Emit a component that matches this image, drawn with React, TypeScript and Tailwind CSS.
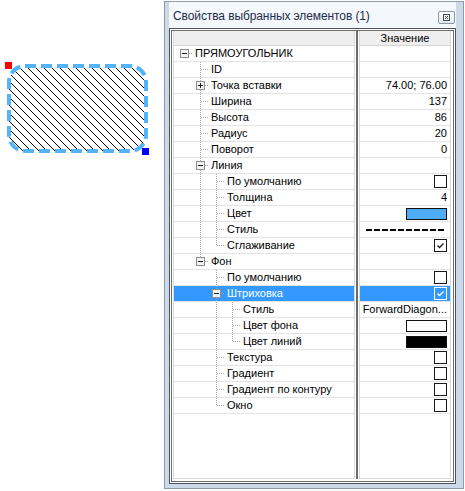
import React from 'react';

type Cell = 'none' | 'pass' | 'tee' | 'elbow' | 'root';

interface Row {
  label: string;
  cells: Cell[];
  expander?: '-' | '+';
  value?: (selected: boolean) => React.ReactNode;
  selected?: boolean;
}

const font = { fontFamily: '"Liberation Sans", Arial, sans-serif' };

const CheckBox = ({ checked, selected }: { checked?: boolean; selected?: boolean }) => (
  <span
    className={`flex w-[13px] h-[13px] items-center justify-center border ${
      selected ? 'border-white' : 'border-[#1a1a1a] bg-white'
    }`}
  >
    {checked && (
      <svg width="11" height="11" viewBox="0 0 11 11">
        <path d="M2.5 5.5 L4.5 7.5 L8.5 3.5" fill="none" stroke={selected ? '#fff' : '#1a1a1a'} strokeWidth="1.3" />
      </svg>
    )}
  </span>
);

const Swatch = ({ color }: { color: string }) => (
  <span className="block w-[41px] h-[12px] border border-[#111]" style={{ background: color }} />
);

const text = (t: string) => () => <span>{t}</span>;
const box = (checked?: boolean) => (selected: boolean) => <CheckBox checked={checked} selected={selected} />;

const rows: Row[] = [
  { label: 'ПРЯМОУГОЛЬНИК', cells: ['root'], expander: '-' },
  { label: 'ID', cells: ['none', 'tee'] },
  { label: 'Точка вставки', cells: ['none', 'tee'], expander: '+', value: text('74.00; 76.00') },
  { label: 'Ширина', cells: ['none', 'tee'], value: text('137') },
  { label: 'Высота', cells: ['none', 'tee'], value: text('86') },
  { label: 'Радиус', cells: ['none', 'tee'], value: text('20') },
  { label: 'Поворот', cells: ['none', 'tee'], value: text('0') },
  { label: 'Линия', cells: ['none', 'tee'], expander: '-' },
  { label: 'По умолчанию', cells: ['none', 'pass', 'tee'], value: box(false) },
  { label: 'Толщина', cells: ['none', 'pass', 'tee'], value: text('4') },
  { label: 'Цвет', cells: ['none', 'pass', 'tee'], value: () => <Swatch color="#4fadf6" /> },
  {
    label: 'Стиль',
    cells: ['none', 'pass', 'tee'],
    value: () => (
      <svg width="78" height="2" className="mr-[3px]">
        <line x1="0" y1="1" x2="78" y2="1" stroke="#000" strokeWidth="2" strokeDasharray="6 2" />
      </svg>
    ),
  },
  { label: 'Сглаживание', cells: ['none', 'pass', 'elbow'], value: box(true) },
  { label: 'Фон', cells: ['none', 'elbow'], expander: '-' },
  { label: 'По умолчанию', cells: ['none', 'none', 'tee'], value: box(false) },
  { label: 'Штриховка', cells: ['none', 'none', 'tee'], expander: '-', selected: true, value: box(true) },
  { label: 'Стиль', cells: ['none', 'none', 'pass', 'tee'], value: text('ForwardDiagon...') },
  { label: 'Цвет фона', cells: ['none', 'none', 'pass', 'tee'], value: () => <Swatch color="#ffffff" /> },
  { label: 'Цвет линий', cells: ['none', 'none', 'pass', 'elbow'], value: () => <Swatch color="#000000" /> },
  { label: 'Текстура', cells: ['none', 'none', 'tee'], value: box(false) },
  { label: 'Градиент', cells: ['none', 'none', 'tee'], value: box(false) },
  { label: 'Градиент по контуру', cells: ['none', 'none', 'tee'], value: box(false) },
  { label: 'Окно', cells: ['none', 'none', 'elbow'], value: box(false) },
];

const dot = { stroke: '#a8a8a8', strokeWidth: 1, strokeDasharray: '1 1', shapeRendering: 'crispEdges' as const };

const TreeCell = ({ kind, expander }: { kind: Cell; expander?: '-' | '+' }) => (
  <svg width="16" height="16" className="shrink-0 overflow-visible self-start">
    {(kind === 'pass' || kind === 'tee') && <line x1="8.5" y1="0" x2="8.5" y2="16" {...dot} />}
    {kind === 'elbow' && <line x1="8.5" y1="0" x2="8.5" y2="8" {...dot} />}
    {(kind === 'tee' || kind === 'elbow' || kind === 'root') && <line x1="9" y1="7.5" x2="16" y2="7.5" {...dot} />}
    {expander && (
      <g shapeRendering="crispEdges">
        <rect x="4.5" y="3.5" width="8" height="8" fill="#f1f1f1" stroke="#8e8f8f" />
        <line x1="6" y1="7.5" x2="11" y2="7.5" stroke="#222" />
        {expander === '+' && <line x1="8.5" y1="5" x2="8.5" y2="10" stroke="#222" />}
      </g>
    )}
  </svg>
);

const Canvas = () => (
  <svg width="164" height="491" className="shrink-0">
    <defs>
      <pattern id="hatch" width="8" height="8" patternUnits="userSpaceOnUse">
        <path d="M0 0 L8 8 M-1 7 L1 9 M7 -1 L9 1" stroke="#000" strokeWidth="1" shapeRendering="crispEdges" />
      </pattern>
    </defs>
    <rect x="9" y="66" width="137" height="85" rx="16" fill="#fff" />
    <rect x="9" y="66" width="137" height="85" rx="16" fill="url(#hatch)" />
    <rect x="9" y="66" width="137" height="85" rx="16" fill="none" stroke="#52b4fa" strokeWidth="4" strokeDasharray="11 5" />
    <rect x="5" y="62" width="7" height="7" fill="#ff0000" />
    <rect x="142" y="148" width="7" height="7" fill="#0000ff" />
  </svg>
);

export default function App() {
  return (
    <div className="flex w-[465px] h-[491px] bg-white text-[11px] text-black" style={font}>
      <Canvas />
      <div className="mt-px flex h-[488px] w-[300px] shrink-0 flex-col border border-[#8d9bad] bg-[#cbd9e8] pl-[4px] pr-[7px] pb-[4px]">
        <div className="flex h-[26px] shrink-0 items-center justify-between bg-[#f4f7fb] pt-[2px] pl-[4px] pr-[1px]">
          <span className="text-[12px] tracking-[-0.1px] text-[#1e2d4d]">Свойства выбранных элементов (1)</span>
          <span className="mt-[2px] flex h-[13px] w-[17px] items-center justify-center rounded-[2px] border border-[#8a97a8] bg-gradient-to-b from-[#fdfdfd] to-[#e4e8ee]">
            <svg width="7" height="7" viewBox="0 0 7 7" shapeRendering="crispEdges">
              <rect x="0.5" y="0.5" width="6" height="6" fill="none" stroke="#4a4f57" />
              <path d="M2 2 L5 5 M5 2 L2 5" stroke="#4a4f57" />
            </svg>
          </span>
        </div>
        <div className="flex-1 border border-[#4c535c] bg-white p-px">
          <div className="flex h-full border border-[#6e6e6e] bg-white pl-px pr-[2px] pb-[2px]">
            {/* names */}
            <div className="flex w-[182px] shrink-0 flex-col border-x border-b border-[#dadada]">
              <div className="h-[15px] shrink-0 border-b border-[#d3d3d3] bg-[#efefef]" />
              {rows.map((r, i) => (
                <div
                  key={i}
                  className={`flex h-[16px] shrink-0 items-center border-b border-[#e3e3e3] pl-[2px] ${
                    r.selected ? 'bg-[#3399ff] text-white' : ''
                  }`}
                >
                  {r.cells.map((c, j) => (
                    <TreeCell key={j} kind={c} expander={j === r.cells.length - 1 ? r.expander : undefined} />
                  ))}
                  <span className="ml-[3px] whitespace-nowrap leading-[15px]">{r.label}</span>
                </div>
              ))}
            </div>
            <div className="w-px shrink-0 bg-white" />
            <div className="w-[2px] shrink-0 bg-[#6c6c6c]" />
            <div className="w-px shrink-0 bg-white" />
            {/* values */}
            <div className="flex w-[92px] shrink-0 flex-col border-x border-b border-[#dadada]">
              <div className="flex h-[15px] shrink-0 items-center justify-center border-b border-[#d3d3d3] bg-[#efefef] leading-[14px]">
                Значение
              </div>
              {rows.map((r, i) => (
                <div
                  key={i}
                  className={`flex h-[16px] shrink-0 items-center justify-end whitespace-nowrap border-b border-[#e3e3e3] pr-[3px] leading-[15px] ${
                    r.selected ? 'bg-[#3399ff] text-white' : ''
                  }`}
                >
                  {r.value ? r.value(!!r.selected) : null}
                </div>
              ))}
            </div>
          </div>
        </div>
      </div>
    </div>
  );
}
